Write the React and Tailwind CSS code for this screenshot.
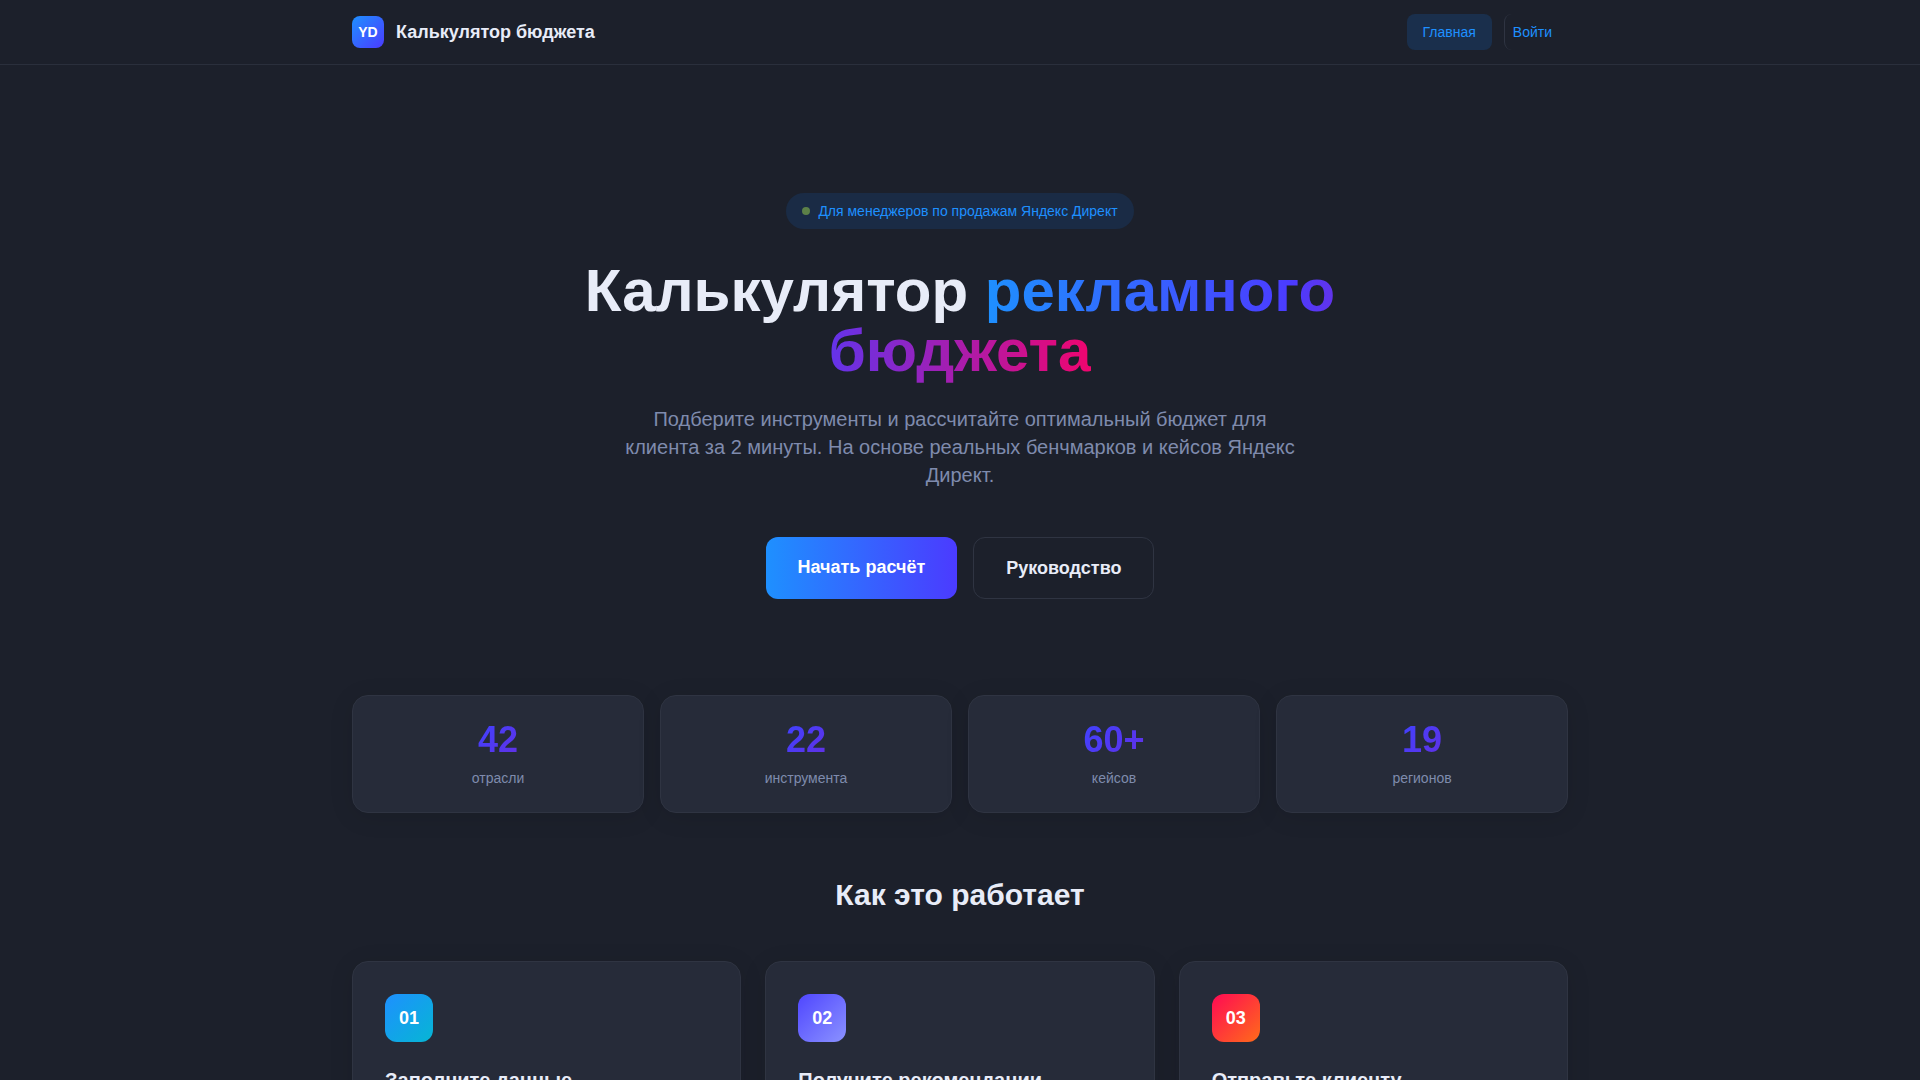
const stats = [
  ["42", "отрасли"],
  ["22", "инструмента"],
  ["60+", "кейсов"],
  ["19", "регионов"],
];

const steps = [
  ["01", "Заполните данные", "bg-[linear-gradient(135deg,#1e90ff,#06b6d4)]"],
  ["02", "Получите рекомендации", "bg-[linear-gradient(135deg,#4f46ff,#8b92ff)]"],
  ["03", "Отправьте клиенту", "bg-[linear-gradient(135deg,#ff0a54,#ff6b1a)]"],
];

export default function App() {
  return (
    <div className="min-h-screen bg-[#1c202b] font-['Liberation_Sans',Arial,sans-serif] text-[#e8ecf8]">
      <header className="h-[65px] border-b border-[#2a2f3c]">
        <div className="mx-auto flex h-16 max-w-[1280px] items-center justify-between px-8">
          <div className="flex items-center gap-3">
            <div className="flex h-8 w-8 items-center justify-center rounded-lg bg-[linear-gradient(135deg,#1e90ff,#4b3bff)] text-sm font-bold text-white">
              YD
            </div>
            <span className="text-lg font-semibold text-[#e8ecf8]">Калькулятор бюджета</span>
          </div>
          <nav className="flex items-center gap-3">
            <a className="flex h-9 items-center rounded-lg bg-[#1a2f4c] px-4 text-sm text-[#1e90ff]">Главная</a>
            <a className="flex h-9 items-center rounded-lg border-l border-[#2f3442] pl-2 pr-4 text-sm text-[#1e90ff]">Войти</a>
          </nav>
        </div>
      </header>

      <main className="mx-auto max-w-[1280px] px-8">
        <section className="flex flex-col items-center pt-32 text-center">
          <div className="flex h-9 items-center gap-2 rounded-full bg-[#1a2b45] px-4 text-sm text-[#1e90ff]">
            <span className="h-2 w-2 rounded-full bg-[#5c8048]" />
            Для менеджеров по продажам Яндекс Директ
          </div>
          <h1 className="mt-8 max-w-[800px] text-[60px] font-bold leading-[60px] text-[#e8ecf8]">
            Калькулятор{" "}
            <span className="bg-[linear-gradient(90deg,#1e90ff,#4b3bff,#f0056e)] bg-clip-text text-transparent">
              рекламного бюджета
            </span>
          </h1>
          <p className="mt-6 max-w-[672px] text-xl leading-7 text-[#7f8bad]">
            Подберите инструменты и рассчитайте оптимальный бюджет для клиента за 2 минуты. На основе реальных бенчмарков и кейсов Яндекс Директ.
          </p>
          <div className="mt-12 flex items-center gap-4">
            <button className="flex h-[62px] items-center justify-center rounded-xl bg-[linear-gradient(90deg,#1e90ff,#4b3bff)] px-8 pb-0.5 text-lg font-semibold text-white">
              Начать расчёт
            </button>
            <button className="flex h-[62px] items-center justify-center rounded-xl border border-[#2f3442] px-8 text-lg font-semibold text-[#e8ecf8]">
              Руководство
            </button>
          </div>
        </section>

        <section className="mt-24 grid grid-cols-4 gap-4">
          {stats.map(([n, l]) => (
            <div key={l} className="flex h-[118px] flex-col items-center justify-center rounded-2xl border border-[#2f3442] bg-[#262b39] shadow-[0_4px_24px_rgba(0,0,0,0.1)]">
              <div className="bg-[linear-gradient(135deg,#3f42ff,#6230e4)] bg-clip-text text-4xl font-bold leading-10 text-transparent">{n}</div>
              <div className="mt-2 text-sm text-[#7f8bad]">{l}</div>
            </div>
          ))}
        </section>

        <h2 className="mt-16 text-center text-3xl font-bold leading-9 text-[#e8ecf8]">Как это работает</h2>

        <section className="mt-12 grid grid-cols-3 gap-6 pb-16">
          {steps.map(([n, t, g]) => (
            <div key={n} className="rounded-2xl border border-[#2f3442] bg-[#262b39] p-8 shadow-[0_4px_24px_rgba(0,0,0,0.1)]">
              <div className={"flex h-12 w-12 items-center justify-center rounded-xl text-lg font-bold text-white " + g}>{n}</div>
              <h3 className="mt-6 text-xl font-semibold text-[#e8ecf8]">{t}</h3>
            </div>
          ))}
        </section>
      </main>
    </div>
  );
}
